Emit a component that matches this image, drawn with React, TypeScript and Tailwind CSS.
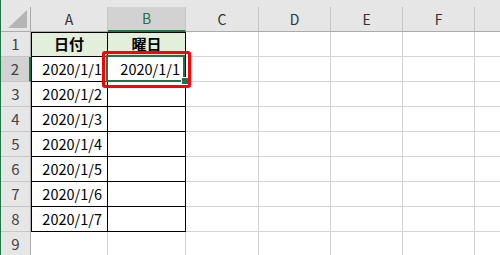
import * as React from 'react';

const font = { fontFamily: '"Noto Sans CJK JP", "Liberation Sans", sans-serif' };

const colWidths = ['w-[77px]', 'w-[78px]', 'w-[73px]', 'w-[72px]', 'w-[72px]', 'w-[72px]', 'flex-1'];
const colLetters = ['A', 'B', 'C', 'D', 'E', 'F', ''];

const dates = ['2020/1/1', '2020/1/2', '2020/1/3', '2020/1/4', '2020/1/5', '2020/1/6', '2020/1/7'];

function ColumnHeader() {
  return (
    <div className="flex h-[25px] border-b border-[#ababab]">
      {/* corner */}
      <div className="relative w-[30px] shrink-0 border-r border-[#ababab] bg-[#e6e6e6]">
        <svg className="absolute left-[7px] top-[3px]" width="19" height="18" viewBox="0 0 19 18">
          <polygon points="0,18 19,18 19,0" fill="#b5b5b5" />
        </svg>
      </div>
      {colLetters.map((c, i) => {
        const selected = c === 'B';
        return (
          <div
            key={i}
            className={`${colWidths[i]} shrink-0 flex items-center justify-center text-[14px] ${
              i < 6 ? 'border-r border-[#c6c6c6]' : ''
            } ${selected ? 'bg-[#d2d2d2] text-[#217346] border-b-2 border-b-[#217346] -mb-px' : 'bg-[#e6e6e6] text-[#333]'}`}
          >
            {c}
          </div>
        );
      })}
    </div>
  );
}

function Row({ n }: { n: number }) {
  const inTable = n >= 1 && n <= 8;
  const isHead = n === 1;
  return (
    <div className="flex h-[25px]">
      <div
        className={`w-[30px] shrink-0 flex items-center justify-center text-[15px] text-[#444] border-b border-[#c6c6c6] ${
          n === 2 ? 'bg-[#d2d2d2] border-r-2 border-r-[#217346]' : 'bg-[#e6e6e6] border-r border-r-[#ababab]'
        }`}
      >
        {n}
      </div>
      {colWidths.map((w, i) => {
        const tableCell = inTable && i < 2;
        const shadows =
          tableCell && i === 0 && isHead
            ? 'shadow-[inset_1px_1px_0_#000]'
            : tableCell && i === 0
              ? 'shadow-[inset_1px_0_0_#000]'
              : tableCell && isHead
                ? 'shadow-[inset_0_1px_0_#000]'
                : '';
        let content: React.ReactNode = null;
        if (isHead && i === 0) content = '日付';
        if (isHead && i === 1) content = '曜日';
        if (!isHead && inTable && i === 0) content = dates[n - 2];
        if (n === 2 && i === 1) content = '2020/1/1';
        return (
          <div
            key={i}
            className={`${w} shrink-0 relative flex items-center text-black ${
              tableCell ? 'border-r border-b border-black' : `border-b border-[#d4d4d4] ${i < 6 ? 'border-r' : ''}`
            } ${shadows} ${
              isHead && tableCell ? 'bg-[#e2efda] justify-center font-bold text-[15px]' : 'justify-end pr-[5px] text-[14.5px]'
            }`}
          >
            {content}
            {n === 2 && i === 1 && (
              <>
                <div className="absolute -left-[2px] -top-[2px] right-0 -bottom-px z-10 border-2 border-[#217346]" />
                <div className="absolute -right-[3px] -bottom-[3px] z-20 h-[6px] w-[6px] bg-[#217346] ring-1 ring-white" />
                <div className="absolute -left-[6px] -top-[6px] z-30 h-[37px] w-[89px] rounded-[3px] border-[3px] border-[#ff0000]" />
              </>
            )}
          </div>
        );
      })}
    </div>
  );
}

export default function App() {
  return (
    <div className="h-[255px] w-[500px] overflow-hidden bg-white border-l border-[#217346]" style={font}>
      <div className="h-[7px] bg-[#e6e6e6]" />
      <ColumnHeader />
      {[1, 2, 3, 4, 5, 6, 7, 8, 9].map(n => (
        <Row key={n} n={n} />
      ))}
    </div>
  );
}
